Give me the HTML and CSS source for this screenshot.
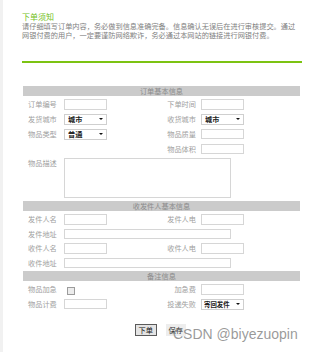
FILE: index.html
```html
<!DOCTYPE html>
<html lang="zh-CN">
<head>
<meta charset="utf-8">
<title>下单须知</title>
<link rel="stylesheet" href="styles.css">
</head>
<body>
<div class="page">
  <div class="notice">
    <h1 class="title">下单须知</h1>
    <p class="desc">请仔细填写订单内容，务必做到信息准确完备。信息确认无误后在进行审核提交。通过网银付费的用户，一定要谨防网络欺诈，务必通过本网站的链接进行网银付费。</p>
  </div>
  <div class="rule"></div>

  <form class="form">
    <div class="bar">订单基本信息</div>
    <div class="sec">
      <span class="lbl">订单编号</span><span><input class="txt" type="text"></span>
      <span class="lbl r">下单时间</span><span><input class="txt" type="text"></span>

      <span class="lbl">发货城市</span><span class="sel"><select><option>城市</option></select></span>
      <span class="lbl r">收货城市</span><span class="sel"><select><option>城市</option></select></span>

      <span class="lbl">物品类型</span><span class="sel"><select><option>普通</option></select></span>
      <span class="lbl r">物品质量</span><span><input class="txt" type="text"></span>

      <span class="lbl r c3">物品体积</span><span><input class="txt" type="text"></span>

      <span class="lbl c1">物品描述</span><span class="span3"><textarea class="area"></textarea></span>
    </div>

    <div class="bar">收发件人基本信息</div>
    <div class="sec">
      <span class="lbl">发件人名</span><span><input class="txt" type="text"></span>
      <span class="lbl r">发件人电</span><span><input class="txt" type="text"></span>

      <span class="lbl">发件地址</span><span class="span3"><input class="txt wide" type="text"></span>

      <span class="lbl">收件人名</span><span><input class="txt" type="text"></span>
      <span class="lbl r">收件人电</span><span><input class="txt" type="text"></span>

      <span class="lbl">收件地址</span><span class="span3"><input class="txt wide" type="text"></span>
    </div>

    <div class="bar">备注信息</div>
    <div class="sec last">
      <span class="lbl">物品加急</span><span><input class="chk" type="checkbox"></span>
      <span class="lbl r">加急费</span><span><input class="txt" type="text"></span>

      <span class="lbl">物品计费</span><span><input class="txt" type="text"></span>
      <span class="lbl r">投递失败</span><span class="sel"><select class="small"><option>寄回发件</option></select></span>
    </div>

    <div class="actions">
      <button type="button" class="btn primary">下单</button>
      <button type="button" class="btn">保存</button>
    </div>
  </form>
</div>
<div class="watermark">CSDN @biyezuopin</div>
</body>
</html>
```
FILE: styles.css
```css
html, body {
  margin: 0;
  padding: 0;
  background: #ffffff;
}
body {
  font-family: "Noto Sans CJK SC", "Liberation Sans", sans-serif;
  width: 314px;
  height: 352px;
  overflow: hidden;
}
.page {
  border-left: 3px solid #f1f1f1;
  min-height: 352px;
  box-sizing: border-box;
  padding: 12px 0 0 19px;
}
.notice {
  width: 280px;
}
.title {
  margin: 0;
  font-size: 8px;
  line-height: 10px;
  font-weight: normal;
  color: #73bf1c;
}
.desc {
  margin: 0;
  font-size: 7.2px;
  line-height: 9px;
  color: #808080;
}
.rule {
  width: 280px;
  margin-top: 21px;
  border-top: 2px solid #7cc312;
}
.form {
  width: 277px;
  margin: 23px 0 0 1px;
}
.bar {
  height: 10px;
  line-height: 10px;
  background: #cbcbcb;
  color: #8a8a8a;
  font-size: 7.2px;
  text-align: center;
}
.sec {
  display: grid;
  grid-template-columns: 41px 96px 41px 1fr;
  grid-auto-rows: minmax(10.5px, auto);
  row-gap: 4px;
  padding: 3px 0 3px;
}
.sec.last {
  padding-bottom: 0;
}
.lbl {
  font-size: 7.2px;
  line-height: 10.5px;
  color: #a0a0a0;
  padding-left: 5px;
  white-space: nowrap;
}
.lbl.r {
  text-align: right;
  padding-left: 0;
  padding-right: 5px;
}
.c1 { grid-column: 1; }
.c3 { grid-column: 3; }
.span3 { grid-column: 2 / 5; }
.txt {
  display: block;
  box-sizing: border-box;
  width: 43px;
  height: 10.5px;
  margin: 0;
  padding: 0;
  border: 1px solid #d6d6d6;
  background: #fff;
  outline: none;
}
.txt.wide {
  width: 167px;
}
.area {
  display: block;
  box-sizing: border-box;
  width: 167px;
  height: 40px;
  margin: 0;
  padding: 0;
  border: 1px solid #d6d6d6;
  resize: none;
  background: #fff;
}
.sel {
  position: relative;
  display: block;
  width: 43px;
  height: 11px;
}
.sel select {
  -webkit-appearance: none;
  appearance: none;
  display: block;
  box-sizing: border-box;
  width: 43px;
  height: 11px;
  margin: 0;
  padding: 0 0 0 3px;
  border: 1px solid #cfcfcf;
  border-radius: 0;
  background: #fff;
  color: #222;
  font-family: "Noto Sans CJK SC", "Liberation Sans", sans-serif;
  font-size: 7.2px;
  line-height: 9px;
  font-weight: bold;
}
.sel select.small {
  padding-left: 2px;
  font-size: 6.4px;
}
.sel::after {
  content: "";
  position: absolute;
  right: 4px;
  top: 4.5px;
  border-left: 2px solid transparent;
  border-right: 2px solid transparent;
  border-top: 2.5px solid #111;
}
.chk {
  -webkit-appearance: none;
  appearance: none;
  display: block;
  box-sizing: border-box;
  width: 8px;
  height: 8px;
  margin: 2.5px 0 0 3px;
  border: 1px solid #9c9c9c;
  background: #ececec;
}
.actions {
  display: flex;
  justify-content: center;
  gap: 9px;
  margin-top: 14px;
  padding-right: 2px;
}
.btn {
  box-sizing: border-box;
  height: 12px;
  margin: 0;
  padding: 0 2px;
  font-family: "Noto Sans CJK SC", "Liberation Sans", sans-serif;
  font-size: 7.2px;
  line-height: 10px;
  color: #333;
  background: #ededed;
  border: 1px solid #ededed;
  border-radius: 0;
}
.btn.primary {
  border: 1px solid #5a5a5a;
  background: #e4e4e4;
  color: #111;
  padding: 0 2.5px;
}
.watermark {
  position: absolute;
  left: 173px;
  top: 325px;
  font-family: "Liberation Sans", sans-serif;
  font-size: 14px;
  line-height: 18px;
  color: rgba(120, 120, 120, 0.75);
  white-space: nowrap;
}
```
